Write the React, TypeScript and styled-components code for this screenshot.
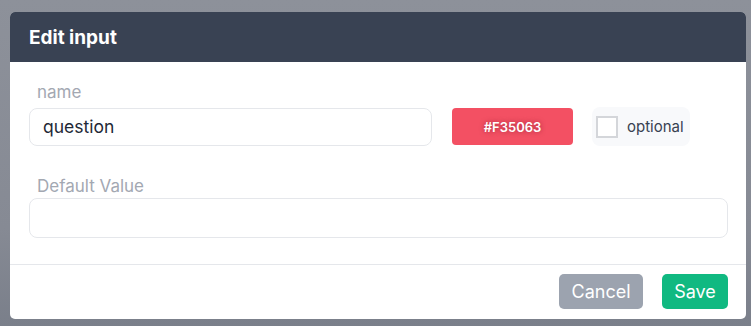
import styled, { createGlobalStyle } from 'styled-components';

const GlobalStyle = createGlobalStyle`
  html, body {
    margin: 0;
    padding: 0;
  }
  body {
    font-family: Inter, 'Noto Sans', 'Liberation Sans', sans-serif;
    background: #8c9099;
  }
`;

const Overlay = styled.div`
  width: 751px;
  height: 326px;
  box-sizing: border-box;
  padding: 12px 5px 0 10px;
  background: linear-gradient(180deg, #8d919a 0%, #868a94 70%, #7a7f8a 100%);
  overflow: hidden;
`;

const Modal = styled.div`
  width: 736px;
  height: 307px;
  background: #ffffff;
  border-radius: 5px;
  overflow: hidden;
  display: flex;
  flex-direction: column;
`;

const Header = styled.div`
  height: 50px;
  display: flex;
  align-items: center;
  padding: 0 19px;
  background: #394253;
  color: #ffffff;
  font-size: 19px;
  font-weight: 700;
`;

const Body = styled.div`
  padding: 18px 18px 26px 19px;
  display: flex;
  flex-direction: column;
`;

const Label = styled.label<{ $top?: number }>`
  display: block;
  padding-left: 8px;
  margin-top: ${(p) => p.$top ?? 0}px;
  line-height: 24px;
  font-size: 17px;
  color: #a3a8b2;
`;

const Row = styled.div<{ $gap?: number }>`
  display: flex;
  align-items: center;
  margin-top: ${(p) => p.$gap ?? 0}px;
`;

const TextInput = styled.input<{ $width: number; $height: number }>`
  box-sizing: border-box;
  width: ${(p) => p.$width}px;
  height: ${(p) => p.$height}px;
  border: 1px solid #e5e7eb;
  border-radius: 8px;
  padding: 0 13px;
  font-family: inherit;
  font-size: 17.5px;
  color: #1f2937;
  background: #ffffff;
  outline: none;
`;

const ColorButton = styled.button<{ $color: string }>`
  margin-left: 20px;
  width: 121px;
  height: 37px;
  border: none;
  border-radius: 4px;
  background: ${(p) => p.$color};
  color: #ffffff;
  font-family: inherit;
  font-size: 13px;
  font-weight: 600;
  text-shadow: 0 0 5px rgba(110, 15, 35, 0.55);
`;

const OptionalBox = styled.div`
  margin-left: 19px;
  width: 98px;
  height: 39px;
  box-sizing: border-box;
  border-radius: 8px;
  background: #f8f9fb;
  display: flex;
  align-items: center;
  padding-left: 4px;
  gap: 9px;
  font-size: 15px;
  color: #374151;
`;

const CheckBox = styled.span`
  width: 22px;
  height: 22px;
  box-sizing: border-box;
  border: 2px solid #d4d6da;
  background: #ffffff;
`;

const Footer = styled.div`
  border-top: 1px solid #e5e7eb;
  display: flex;
  justify-content: flex-end;
  gap: 19px;
  padding: 9px 18px 0 0;
`;

const Button = styled.button<{ $bg: string; $width: number }>`
  width: ${(p) => p.$width}px;
  height: 35px;
  border: none;
  border-radius: 5px;
  background: ${(p) => p.$bg};
  color: #ffffff;
  font-family: inherit;
  font-size: 18px;
  font-weight: 400;
`;

export default function App() {
  return (
    <>
      <GlobalStyle />
      <Overlay>
        <Modal>
          <Header>Edit input</Header>
          <Body>
            <Label>name</Label>
            <Row $gap={3}>
              <TextInput $width={403} $height={38} defaultValue="question" />
              <ColorButton $color="#f35063">#F35063</ColorButton>
              <OptionalBox>
                <CheckBox />
                optional
              </OptionalBox>
            </Row>
            <Label $top={28}>Default Value</Label>
            <Row>
              <TextInput $width={699} $height={40} defaultValue="" />
            </Row>
          </Body>
          <Footer>
            <Button $bg="#9ca3af" $width={84}>Cancel</Button>
            <Button $bg="#10b981" $width={66}>Save</Button>
          </Footer>
        </Modal>
      </Overlay>
    </>
  );
}
